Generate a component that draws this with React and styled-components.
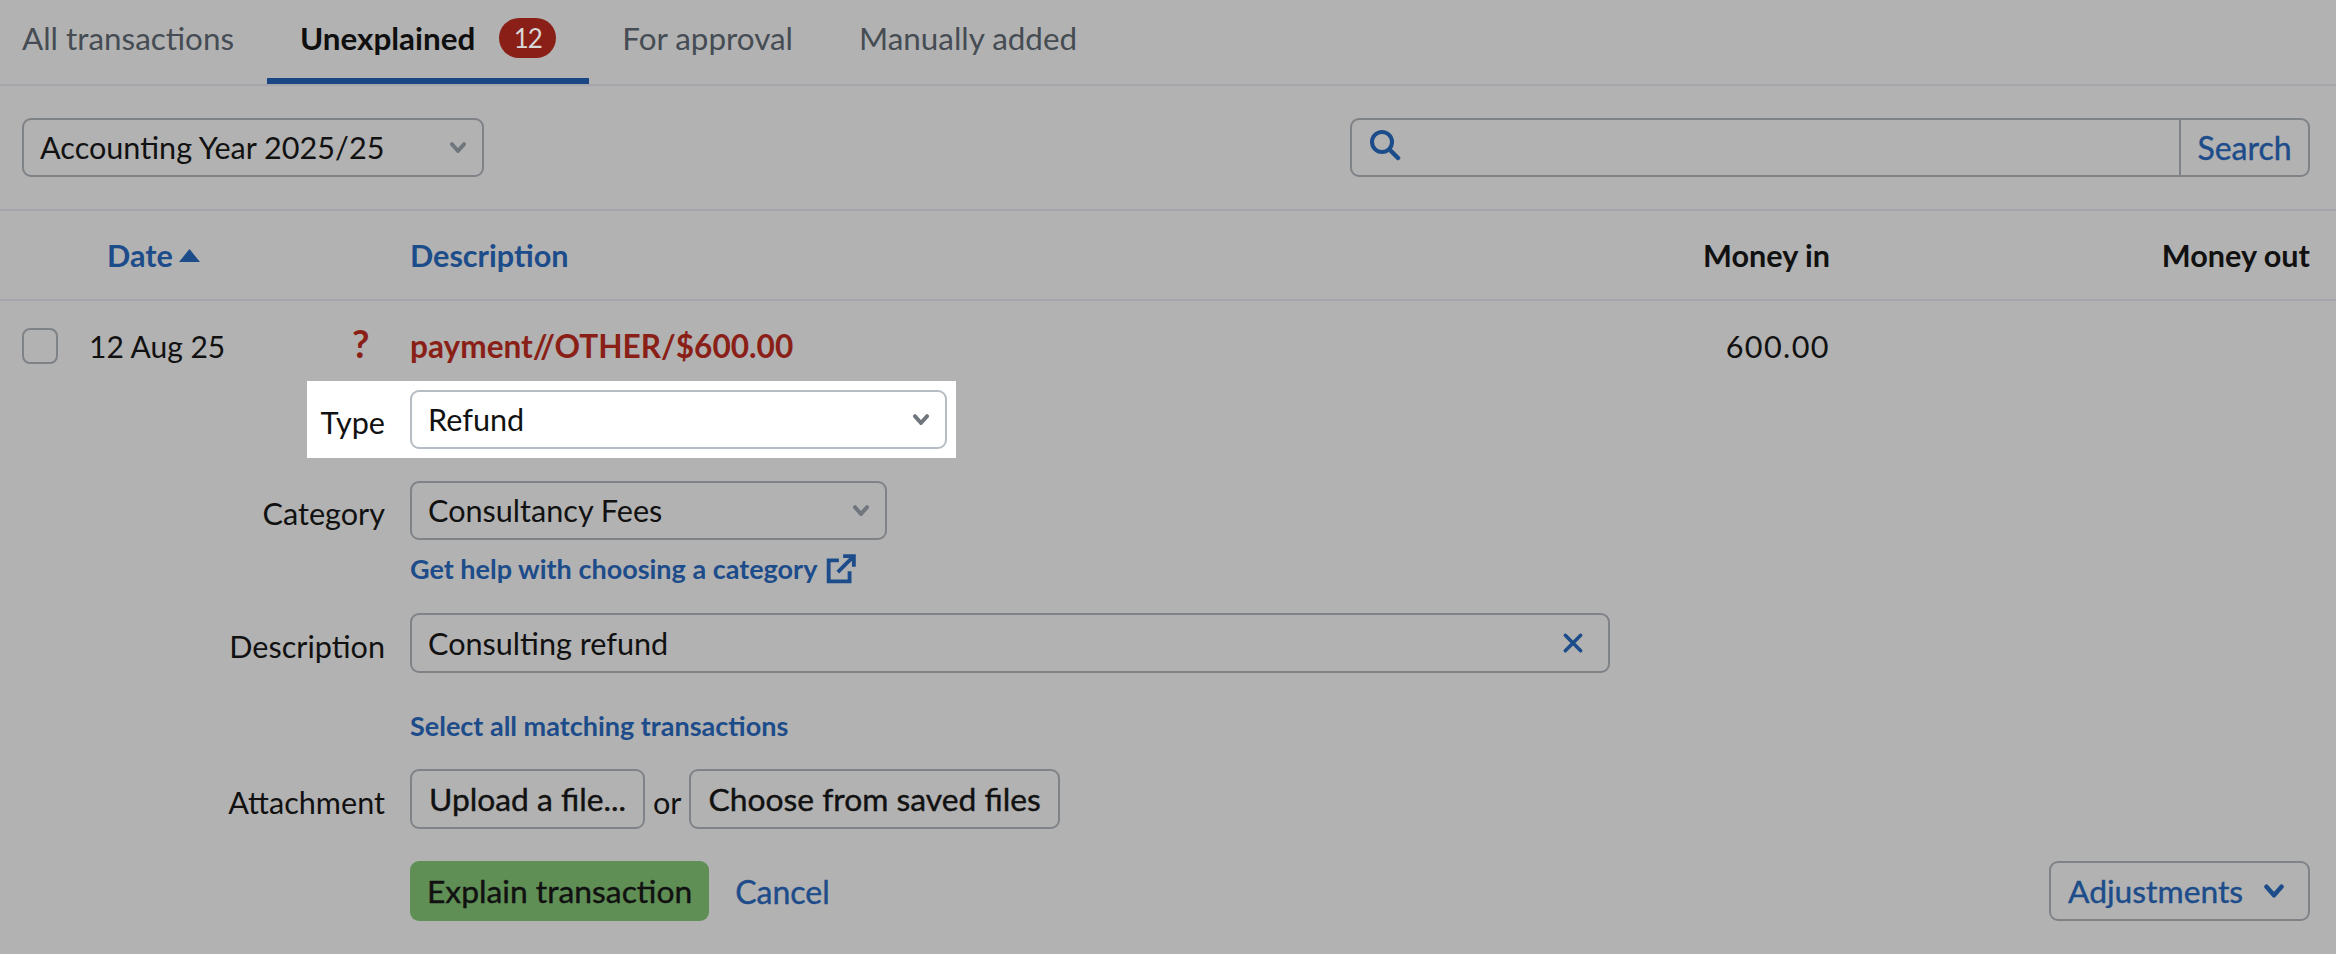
import React from "react";
import styled, { createGlobalStyle } from "styled-components";

const Global = createGlobalStyle`
  html, body { margin: 0; padding: 0; background: #b2b2b2; }
  body { font-family: "Lato", "Liberation Sans", sans-serif; font-size: 30.6px; color: #111; }
  * { box-sizing: border-box; }
`;

const Page = styled.div`
  width: 2336px;
  height: 954px;
  overflow: hidden;
  background: #b2b2b2;
`;

const Tabs = styled.nav`
  display: flex;
  height: 86px;
  padding-left: 22px;
  border-bottom: 2px solid #a5a5ab;
`;

const Tab = styled.div`
  display: flex;
  align-items: center;
  height: 84px;
  padding: 0 33px 3px;
  border-bottom: 6px solid ${(p) => (p.$active ? "#1b4684" : "transparent")};
  color: ${(p) => (p.$active ? "#0f0f0f" : "#454c53")};
  font-size: 31.4px;
  font-weight: ${(p) => (p.$active ? 700 : 400)};
  gap: 24px;
  &:first-child { padding-left: 0; }
`;

const Badge = styled.span`
  display: inline-flex;
  align-items: center;
  justify-content: center;
  width: 57px;
  height: 40px;
  border-radius: 20px;
  background: #8a1f17;
  color: #d8d8d8;
  font-size: 26px;
  font-weight: 400;
  letter-spacing: -1px;
`;

const Toolbar = styled.div`
  display: flex;
  justify-content: space-between;
  align-items: center;
  height: 125px;
  padding: 0 26px 0 22px;
  border-bottom: 2px solid #a5a5ab;
`;

const Select = styled.div`
  display: flex;
  align-items: center;
  justify-content: space-between;
  width: ${(p) => p.$width}px;
  height: 59px;
  padding: 0 16px 0 16px;
  border: 2px solid ${(p) => (p.$light ? "#b6bcc3" : "#7f8387")};
  border-radius: 9px;
  color: #111;
  background: ${(p) => (p.$light ? "#fff" : "transparent")};
`;

const SearchBox = styled.div`
  display: flex;
  align-items: stretch;
  width: 960px;
  height: 59px;
  border: 2px solid #7f8387;
  border-radius: 9px;
`;

const SearchField = styled.div`
  flex: 1;
  display: flex;
  align-items: center;
  padding: 0 0 5px 17px;
`;

const SearchButton = styled.div`
  display: flex;
  align-items: center;
  justify-content: center;
  width: 129px;
  border-left: 2px solid #7f8387;
  color: #1d4c8a;
  font-size: 32px;
  -webkit-text-stroke: 0.4px #1d4c8a;
`;

const Grid = styled.div`
  display: grid;
  grid-template-columns: 67px 263px 58px 1fr 500px 480px;
  align-items: center;
  padding: 0 26px 0 22px;
`;

const HeadRow = styled(Grid)`
  height: 90px;
  border-bottom: 2px solid #a5a5ab;
  font-weight: 700;
`;

const SortHead = styled.div`
  grid-column: 1 / span 3;
  display: flex;
  align-items: center;
  gap: 6px;
  padding-left: 85px;
  color: #1d4c8a;
`;

const BlueHead = styled.div`
  color: #1d4c8a;
`;

const Amount = styled.div`
  text-align: right;
`;

const MoneyValue = styled(Amount)`
  letter-spacing: 1.4px;
`;

const DateCell = styled.div`
  font-size: 30px;
`;

const TxRow = styled(Grid)`
  height: 80px;
  padding-top: 10px;
`;

const Check = styled.div`
  width: 36px;
  height: 36px;
  border: 2px solid #7f8387;
  border-radius: 8px;
`;

const Question = styled.div`
  color: #8a1f17;
  font-size: 38px;
  font-weight: 700;
  margin-top: -6px;
`;

const Payment = styled.div`
  color: #8a1f17;
  font-size: 31.6px;
  font-weight: 700;
`;

const Form = styled.div`
  display: flex;
  flex-direction: column;
  padding: 0 26px 0 22px;
`;

const Field = styled.div`
  display: flex;
  align-items: center;
  gap: 25px;
  margin-top: ${(p) => p.$top || 0}px;
`;

const Spotlight = styled(Field)`
  width: 649px;
  margin-left: 285px;
  padding: 9px 9px 9px 0;
  background: #fff;
`;

const Label = styled.div`
  width: ${(p) => p.$width || 363}px;
  flex: none;
  text-align: right;
  padding-top: 6px;
`;

const LinkLine = styled.div`
  display: flex;
  align-items: center;
  gap: 9px;
  margin: ${(p) => p.$top}px 0 0 388px;
  color: #1d4c8a;
  font-size: 27px;
  font-weight: 700;
`;

const TextInput = styled.div`
  display: flex;
  align-items: center;
  justify-content: space-between;
  width: 1200px;
  height: 60px;
  padding: 0 24px 0 16px;
  border: 2px solid #7f8387;
  border-radius: 9px;
`;

const Button = styled.div`
  display: flex;
  align-items: center;
  height: 60px;
  padding: 0 17px;
  border: 2px solid #7f8387;
  border-radius: 9px;
  font-size: 31.8px;
  -webkit-text-stroke: 0.4px #111;
`;

const Or = styled.span`
  margin: 6px -17px 0;
`;

const Actions = styled.div`
  display: flex;
  align-items: center;
  justify-content: space-between;
  margin: 32px 0 0 388px;
`;

const ActionGroup = styled.div`
  display: flex;
  align-items: center;
  gap: 26px;
`;

const Primary = styled.div`
  display: flex;
  align-items: center;
  height: 60px;
  padding: 0 17px;
  border-radius: 9px;
  background: #5f8f55;
  font-size: 31.8px;
  -webkit-text-stroke: 0.4px #111;
`;

const Cancel = styled.div`
  color: #1d4c8a;
  font-size: 32px;
  -webkit-text-stroke: 0.4px #1d4c8a;
`;

const Adjust = styled.div`
  display: flex;
  align-items: center;
  justify-content: space-between;
  width: 261px;
  height: 60px;
  padding: 0 24px 0 17px;
  border: 2px solid #7f8387;
  border-radius: 9px;
  color: #1d4c8a;
  font-size: 31.8px;
  -webkit-text-stroke: 0.4px #1d4c8a;
`;

const Chevron = ({ color = "#6f767d", w = 16, sw = 4 }) => (
  <svg width={w} height={w * 0.72} viewBox="0 0 16 11.5" fill="none">
    <path d="M2 2.2 L8 9 L14 2.2" stroke={color} strokeWidth={sw} strokeLinecap="round" strokeLinejoin="round" />
  </svg>
);

const Magnifier = () => (
  <svg width="32" height="32" viewBox="0 0 32 32" fill="none">
    <circle cx="13" cy="13" r="10" stroke="#1d4c8a" strokeWidth="4" />
    <path d="M20.5 20.5 L29 29" stroke="#1d4c8a" strokeWidth="4.5" strokeLinecap="round" />
  </svg>
);

const External = () => (
  <svg width="30" height="30" viewBox="0 0 28 28" fill="none">
    <path d="M12 6 H2.5 V25.5 H22 V16" stroke="#1d4c8a" strokeWidth="3.6" />
    <path d="M11 17 L25 3" stroke="#1d4c8a" strokeWidth="3.6" />
    <path d="M16 2 H26 V12" stroke="#1d4c8a" strokeWidth="3.6" />
  </svg>
);

const Cross = () => (
  <svg width="22" height="22" viewBox="0 0 20 20" fill="none">
    <path d="M3 3 L17 17 M17 3 L3 17" stroke="#1d4c8a" strokeWidth="3.2" strokeLinecap="round" />
  </svg>
);

const Triangle = () => (
  <svg width="21" height="13" viewBox="0 0 21 13">
    <path d="M10.5 0 L21 13 H0 Z" fill="#1d4c8a" />
  </svg>
);

export default function App() {
  return (
    <Page>
      <Global />
      <Tabs>
        <Tab>All transactions</Tab>
        <Tab $active>
          Unexplained <Badge>12</Badge>
        </Tab>
        <Tab>For approval</Tab>
        <Tab>Manually added</Tab>
      </Tabs>
      <Toolbar>
        <Select $width={462}>
          Accounting Year 2025/25
          <Chevron />
        </Select>
        <SearchBox>
          <SearchField>
            <Magnifier />
          </SearchField>
          <SearchButton>Search</SearchButton>
        </SearchBox>
      </Toolbar>
      <HeadRow>
        <SortHead>
          Date <Triangle />
        </SortHead>
        <BlueHead>Description</BlueHead>
        <Amount>Money in</Amount>
        <Amount>Money out</Amount>
      </HeadRow>
      <TxRow>
        <Check />
        <DateCell>12 Aug 25</DateCell>
        <Question>?</Question>
        <Payment>payment//OTHER/$600.00</Payment>
        <MoneyValue>600.00</MoneyValue>
        <div />
      </TxRow>
      <Form>
        <Spotlight>
          <Label $width={78}>Type</Label>
          <Select $width={537} $light>
            Refund
            <Chevron />
          </Select>
        </Spotlight>
        <Field $top={23}>
          <Label>Category</Label>
          <Select $width={477}>
            Consultancy Fees
            <Chevron />
          </Select>
        </Field>
        <LinkLine $top={12}>
          Get help with choosing a category <External />
        </LinkLine>
        <Field $top={28}>
          <Label>Description</Label>
          <TextInput>
            Consulting refund
            <Cross />
          </TextInput>
        </Field>
        <LinkLine $top={36}>Select all matching transactions</LinkLine>
        <Field $top={27}>
          <Label>Attachment</Label>
          <Button>Upload a file...</Button>
          <Or>or</Or>
          <Button>Choose from saved files</Button>
        </Field>
        <Actions>
          <ActionGroup>
            <Primary>Explain transaction</Primary>
            <Cancel>Cancel</Cancel>
          </ActionGroup>
          <Adjust>
            Adjustments
            <Chevron color="#1d4c8a" w={20} sw={3.6} />
          </Adjust>
        </Actions>
      </Form>
    </Page>
  );
}
